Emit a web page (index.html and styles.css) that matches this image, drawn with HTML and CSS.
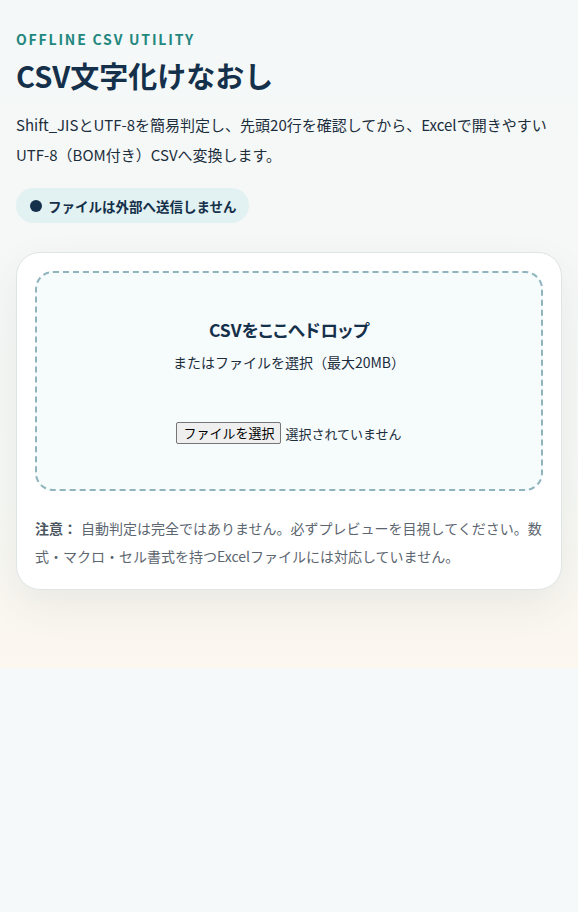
FILE: index.html
```html
<!DOCTYPE html>
<html lang="ja">
<head>
  <meta charset="UTF-8">
  <title>CSV文字化けなおし</title>
  <link rel="stylesheet" href="styles.css">
</head>
<body>
  <main class="app">
    <header class="hero">
      <div class="eyebrow">OFFLINE CSV UTILITY</div>
      <h1>CSV文字化けなおし</h1>
      <p class="lead">Shift_JISとUTF-8を簡易判定し、先頭20行を確認してから、Excelで開きやすいUTF-8（BOM付き）CSVへ変換します。</p>
      <div class="badge"><span class="dot"></span>ファイルは外部へ送信しません</div>
    </header>

    <section class="card">
      <label class="dropzone" id="dropzone">
        <div class="drop-title">CSVをここへドロップ</div>
        <div class="drop-sub">またはファイルを選択（最大20MB）</div>
        <div class="file-picker">
          <input type="file" id="fileInput" accept=".csv,text/csv">
          <span class="file-button">ファイルを選択</span>
          <span class="file-name">選択されていません</span>
        </div>
      </label>
      <p class="note"><strong>注意：</strong>自動判定は完全ではありません。必ずプレビューを目視してください。数式・マクロ・セル書式を持つExcelファイルには対応していません。</p>
    </section>
  </main>
</body>
</html>
```

FILE: styles.css
```css
html {
  background: #f6f9f9;
}

body {
  margin: 0;
  font-family: "Noto Sans CJK JP", "Noto Sans", sans-serif;
  color: #17304a;
  background: linear-gradient(180deg, #f4f8f8 0%, #f6f8f5 70%, #fcf7ef 100%);
}

.app {
  padding: 29px 16px 78px;
}

/* ヘッダー */
.eyebrow {
  font-size: 14px;
  line-height: 20px;
  font-weight: 600;
  letter-spacing: 1.8px;
  color: #22877e;
}

h1 {
  margin: 4px 0 0;
  font-size: 29px;
  line-height: 44px;
  font-weight: 700;
  color: #15304a;
}

.lead {
  margin: 13px 0 0;
  font-size: 15px;
  line-height: 30px;
  color: #1c2d3c;
}

.badge {
  display: inline-flex;
  align-items: center;
  gap: 6px;
  margin-top: 18px;
  height: 35px;
  padding: 0 12px 0 14px;
  border-radius: 18px;
  background: #e2f1f1;
  font-size: 13.5px;
  font-weight: 700;
  color: #15304a;
}

.dot {
  width: 12px;
  height: 12px;
  border-radius: 50%;
  background: #15304a;
}

/* カード */
.card {
  margin-top: 29px;
  padding: 18px 18px 19px;
  background: white;
  border: 1px solid #dfe5e5;
  border-radius: 24px;
  box-shadow: 0 16px 40px rgba(40, 60, 60, 0.08);
}

.dropzone {
  display: flex;
  flex-direction: column;
  align-items: center;
  padding: 43px 20px 45px;
  border: 2px dashed #8fb4bd;
  border-radius: 18px;
  background: #f6fbfc;
  text-align: center;
  cursor: pointer;
}

.drop-title {
  font-size: 17.5px;
  line-height: 28px;
  font-weight: 700;
  color: #15304a;
  font-feature-settings: "palt";
}

.drop-sub {
  margin-top: 6px;
  font-size: 14px;
  line-height: 24px;
  color: #1c2d3c;
}

/* ファイル選択 */
.file-picker {
  display: flex;
  align-items: center;
  gap: 4px;
  margin-top: 48px;
  font-size: 13px;
  color: #1c2d3c;
}

.file-picker input {
  display: none;
}

.file-button {
  padding: 0 6px;
  line-height: 20px;
  border: 1px solid #767676;
  border-radius: 2px;
  background: #efefef;
  color: black;
}

.note {
  margin: 23px 0 0;
  font-size: 14px;
  line-height: 28px;
  color: #5c6670;
}

.note strong {
  margin-right: 4px;
  color: #4a5560;
}
```
